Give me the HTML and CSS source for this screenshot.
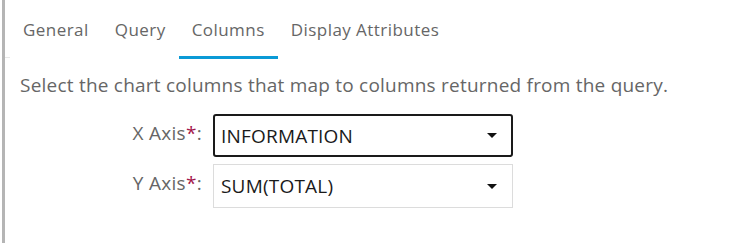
FILE: index.html
```html
<!DOCTYPE html>
<html>
<head>
<meta charset="utf-8">
<link rel="stylesheet" href="styles.css">
</head>
<body>
<div class="panel">
  <div class="tabs">
    <div class="tab-spacer"></div>
    <div class="tab">General</div>
    <div class="tab">Query</div>
    <div class="tab active">Columns</div>
    <div class="tab">Display Attributes</div>
  </div>
  <div class="content">
    <p class="desc">Select the chart columns that map to columns returned from the query.</p>
    <div class="form">
      <div class="row">
        <label class="label">X Axis<span class="req">*</span>:</label>
        <div class="select focused"><span class="value">INFORMATION</span><span class="caret"></span></div>
      </div>
      <div class="row">
        <label class="label">Y Axis<span class="req">*</span>:</label>
        <div class="select"><span class="value">SUM(TOTAL)</span><span class="caret"></span></div>
      </div>
    </div>
  </div>
</div>
</body>
</html>
```
FILE: styles.css
```css
html, body {
  margin: 0;
  padding: 0;
  background: #fff;
}
body {
  width: 730px;
  height: 243px;
  overflow: hidden;
  font-family: "Open Sans", "Liberation Sans", sans-serif;
}
.panel {
  margin-left: 2px;
  border-left: 3px solid #b5b5b5;
  height: 243px;
  box-sizing: border-box;
}
.tabs {
  display: flex;
  align-items: flex-end;
  height: 59px;
}
.tab-spacer {
  width: 5px;
  height: 0;
  border-bottom: 1px solid #e8e8e8;
  margin-bottom: 1px;
}
.tab {
  padding: 19px 13px 0 13px;
  height: 59px;
  box-sizing: border-box;
  font-size: 17px;
  letter-spacing: 0.45px;
  color: #666;
  line-height: 22px;
  border-bottom: 3px solid transparent;
}
.tab.active {
  border-bottom-color: #0a9ad6;
}
.content {
  padding-left: 15px;
}
.desc {
  margin: 13px 0 0 0;
  font-size: 19px;
  letter-spacing: 0.22px;
  line-height: 26px;
  color: #666;
}
.form {
  margin-top: 16px;
  display: flex;
  flex-direction: column;
  gap: 7px;
}
.row {
  display: flex;
  align-items: flex-start;
}
.label {
  width: 193px;
  text-align: right;
  padding-right: 11px;
  box-sizing: border-box;
  font-size: 19px;
  letter-spacing: 0.3px;
  line-height: 26px;
  color: #666;
  padding-top: 6px;
}
.req {
  color: #a3164a;
}
.select {
  width: 300px;
  height: 44px;
  box-sizing: border-box;
  border: 1px solid #dcdcdc;
  display: flex;
  align-items: center;
  justify-content: space-between;
  padding: 0 15px 0 7px;
  font-size: 19px;
  letter-spacing: 0.2px;
  color: #1a1a1a;
}
.select.focused {
  border: 2px solid #1a1a1a;
  border-radius: 3px;
  height: 43px;
  padding-left: 6px;
  padding-right: 14px;
}
.caret {
  width: 0;
  height: 0;
  border-left: 5px solid transparent;
  border-right: 5px solid transparent;
  border-top: 5px solid #111;
}
```
